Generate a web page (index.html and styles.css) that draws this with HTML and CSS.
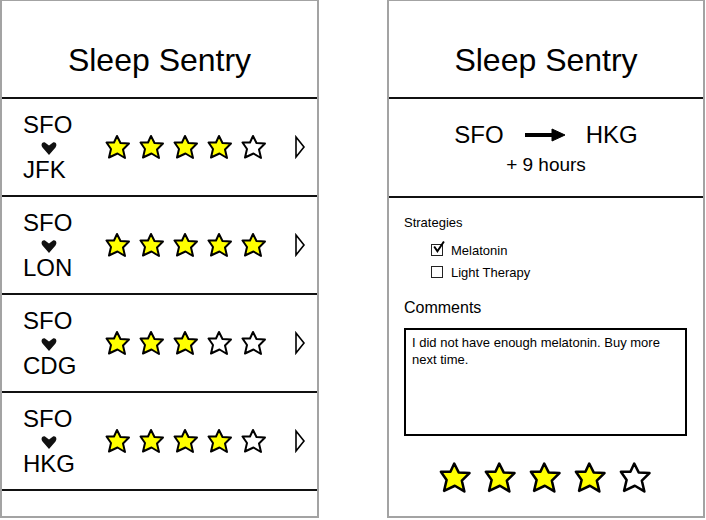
FILE: index.html
```html
<!DOCTYPE html>
<html lang="en">
<head>
    <meta charset="UTF-8">
    <title>Sleep Sentry</title>
    <link rel="stylesheet" href="styles.css">
</head>
<body>
<div class="screens">

    <!-- Trip list -->
    <div class="phone">
        <div class="title">Sleep Sentry</div>

        <div class="trip">
            <div class="codes">
                <div>SFO</div>
                <svg class="heart" viewBox="0 0 18 16"><path d="M9 15 L2.5 7.5 C0.5 5 2 1.5 5 2.5 L9 5.5 L13 2.5 C16 1.5 17.5 5 15.5 7.5 Z"/></svg>
                <div>JFK</div>
            </div>
            <div class="stars">
                <svg class="star on" viewBox="0 0 26 26"><path d="M12 2 L15.5 9 L24 9.5 L18 15.5 L20 24 L12.5 19.5 L4 23.5 L6 15 L1.5 8.5 L9 8.5 Z"/></svg>
                <svg class="star on" viewBox="0 0 26 26"><path d="M12 2 L15.5 9 L24 9.5 L18 15.5 L20 24 L12.5 19.5 L4 23.5 L6 15 L1.5 8.5 L9 8.5 Z"/></svg>
                <svg class="star on" viewBox="0 0 26 26"><path d="M12 2 L15.5 9 L24 9.5 L18 15.5 L20 24 L12.5 19.5 L4 23.5 L6 15 L1.5 8.5 L9 8.5 Z"/></svg>
                <svg class="star on" viewBox="0 0 26 26"><path d="M12 2 L15.5 9 L24 9.5 L18 15.5 L20 24 L12.5 19.5 L4 23.5 L6 15 L1.5 8.5 L9 8.5 Z"/></svg>
                <svg class="star" viewBox="0 0 26 26"><path d="M12 2 L15.5 9 L24 9.5 L18 15.5 L20 24 L12.5 19.5 L4 23.5 L6 15 L1.5 8.5 L9 8.5 Z"/></svg>
            </div>
            <svg class="go" viewBox="0 0 12 24"><path d="M2 2 L10 12 L2 22 Z"/></svg>
        </div>

        <div class="trip">
            <div class="codes">
                <div>SFO</div>
                <svg class="heart" viewBox="0 0 18 16"><path d="M9 15 L2.5 7.5 C0.5 5 2 1.5 5 2.5 L9 5.5 L13 2.5 C16 1.5 17.5 5 15.5 7.5 Z"/></svg>
                <div>LON</div>
            </div>
            <div class="stars">
                <svg class="star on" viewBox="0 0 26 26"><path d="M12 2 L15.5 9 L24 9.5 L18 15.5 L20 24 L12.5 19.5 L4 23.5 L6 15 L1.5 8.5 L9 8.5 Z"/></svg>
                <svg class="star on" viewBox="0 0 26 26"><path d="M12 2 L15.5 9 L24 9.5 L18 15.5 L20 24 L12.5 19.5 L4 23.5 L6 15 L1.5 8.5 L9 8.5 Z"/></svg>
                <svg class="star on" viewBox="0 0 26 26"><path d="M12 2 L15.5 9 L24 9.5 L18 15.5 L20 24 L12.5 19.5 L4 23.5 L6 15 L1.5 8.5 L9 8.5 Z"/></svg>
                <svg class="star on" viewBox="0 0 26 26"><path d="M12 2 L15.5 9 L24 9.5 L18 15.5 L20 24 L12.5 19.5 L4 23.5 L6 15 L1.5 8.5 L9 8.5 Z"/></svg>
                <svg class="star on" viewBox="0 0 26 26"><path d="M12 2 L15.5 9 L24 9.5 L18 15.5 L20 24 L12.5 19.5 L4 23.5 L6 15 L1.5 8.5 L9 8.5 Z"/></svg>
            </div>
            <svg class="go" viewBox="0 0 12 24"><path d="M2 2 L10 12 L2 22 Z"/></svg>
        </div>

        <div class="trip">
            <div class="codes">
                <div>SFO</div>
                <svg class="heart" viewBox="0 0 18 16"><path d="M9 15 L2.5 7.5 C0.5 5 2 1.5 5 2.5 L9 5.5 L13 2.5 C16 1.5 17.5 5 15.5 7.5 Z"/></svg>
                <div>CDG</div>
            </div>
            <div class="stars">
                <svg class="star on" viewBox="0 0 26 26"><path d="M12 2 L15.5 9 L24 9.5 L18 15.5 L20 24 L12.5 19.5 L4 23.5 L6 15 L1.5 8.5 L9 8.5 Z"/></svg>
                <svg class="star on" viewBox="0 0 26 26"><path d="M12 2 L15.5 9 L24 9.5 L18 15.5 L20 24 L12.5 19.5 L4 23.5 L6 15 L1.5 8.5 L9 8.5 Z"/></svg>
                <svg class="star on" viewBox="0 0 26 26"><path d="M12 2 L15.5 9 L24 9.5 L18 15.5 L20 24 L12.5 19.5 L4 23.5 L6 15 L1.5 8.5 L9 8.5 Z"/></svg>
                <svg class="star" viewBox="0 0 26 26"><path d="M12 2 L15.5 9 L24 9.5 L18 15.5 L20 24 L12.5 19.5 L4 23.5 L6 15 L1.5 8.5 L9 8.5 Z"/></svg>
                <svg class="star" viewBox="0 0 26 26"><path d="M12 2 L15.5 9 L24 9.5 L18 15.5 L20 24 L12.5 19.5 L4 23.5 L6 15 L1.5 8.5 L9 8.5 Z"/></svg>
            </div>
            <svg class="go" viewBox="0 0 12 24"><path d="M2 2 L10 12 L2 22 Z"/></svg>
        </div>

        <div class="trip">
            <div class="codes">
                <div>SFO</div>
                <svg class="heart" viewBox="0 0 18 16"><path d="M9 15 L2.5 7.5 C0.5 5 2 1.5 5 2.5 L9 5.5 L13 2.5 C16 1.5 17.5 5 15.5 7.5 Z"/></svg>
                <div>HKG</div>
            </div>
            <div class="stars">
                <svg class="star on" viewBox="0 0 26 26"><path d="M12 2 L15.5 9 L24 9.5 L18 15.5 L20 24 L12.5 19.5 L4 23.5 L6 15 L1.5 8.5 L9 8.5 Z"/></svg>
                <svg class="star on" viewBox="0 0 26 26"><path d="M12 2 L15.5 9 L24 9.5 L18 15.5 L20 24 L12.5 19.5 L4 23.5 L6 15 L1.5 8.5 L9 8.5 Z"/></svg>
                <svg class="star on" viewBox="0 0 26 26"><path d="M12 2 L15.5 9 L24 9.5 L18 15.5 L20 24 L12.5 19.5 L4 23.5 L6 15 L1.5 8.5 L9 8.5 Z"/></svg>
                <svg class="star on" viewBox="0 0 26 26"><path d="M12 2 L15.5 9 L24 9.5 L18 15.5 L20 24 L12.5 19.5 L4 23.5 L6 15 L1.5 8.5 L9 8.5 Z"/></svg>
                <svg class="star" viewBox="0 0 26 26"><path d="M12 2 L15.5 9 L24 9.5 L18 15.5 L20 24 L12.5 19.5 L4 23.5 L6 15 L1.5 8.5 L9 8.5 Z"/></svg>
            </div>
            <svg class="go" viewBox="0 0 12 24"><path d="M2 2 L10 12 L2 22 Z"/></svg>
        </div>
    </div>

    <!-- Trip detail -->
    <div class="phone">
        <div class="title">Sleep Sentry</div>

        <div class="flight">
            <div class="route">
                <span>SFO</span>
                <svg class="arrow" viewBox="0 0 42 14"><path d="M1 7 L30 7" /><path class="head" d="M28 1 L41 7 L28 13 Z"/></svg>
                <span>HKG</span>
            </div>
            <div class="shift">+ 9 hours</div>
        </div>

        <div class="details">
            <div class="label">Strategies</div>
            <div class="check first">
                <span class="box"><svg viewBox="0 0 12 12"><path d="M2 5 L5 9.5 L11 0.5"/></svg></span>
                Melatonin
            </div>
            <div class="check">
                <span class="box"></span>
                Light Therapy
            </div>

            <div class="comments-label">Comments</div>
            <div class="comments">I did not have enough melatonin. Buy more next time.</div>

            <div class="rating">
                <svg class="star on" viewBox="0 0 26 26"><path d="M12 2 L15.5 9 L24 9.5 L18 15.5 L20 24 L12.5 19.5 L4 23.5 L6 15 L1.5 8.5 L9 8.5 Z"/></svg>
                <svg class="star on" viewBox="0 0 26 26"><path d="M12 2 L15.5 9 L24 9.5 L18 15.5 L20 24 L12.5 19.5 L4 23.5 L6 15 L1.5 8.5 L9 8.5 Z"/></svg>
                <svg class="star on" viewBox="0 0 26 26"><path d="M12 2 L15.5 9 L24 9.5 L18 15.5 L20 24 L12.5 19.5 L4 23.5 L6 15 L1.5 8.5 L9 8.5 Z"/></svg>
                <svg class="star on" viewBox="0 0 26 26"><path d="M12 2 L15.5 9 L24 9.5 L18 15.5 L20 24 L12.5 19.5 L4 23.5 L6 15 L1.5 8.5 L9 8.5 Z"/></svg>
                <svg class="star" viewBox="0 0 26 26"><path d="M12 2 L15.5 9 L24 9.5 L18 15.5 L20 24 L12.5 19.5 L4 23.5 L6 15 L1.5 8.5 L9 8.5 Z"/></svg>
            </div>
        </div>
    </div>

</div>
</body>
</html>
```

FILE: styles.css
```css
body {
    margin: 0;
    background: #fff;
    font-family: "Liberation Sans", Arial, sans-serif;
    color: #000;
}
.screens {
    display: flex;
    gap: 68px;
}
.phone {
    box-sizing: border-box;
    width: 319px;
    height: 518px;
    border: 2px solid #a3a3a3;
    border-top-width: 1px;
    background: #fff;
}
.phone + .phone { width: 318px; }

.title {
    box-sizing: border-box;
    height: 98px;
    padding-top: 22px;
    border-bottom: 2px solid #111;
    display: flex;
    align-items: center;
    justify-content: center;
    font-size: 32px;
}

/* list rows */
.trip {
    height: 96px;
    border-bottom: 2px solid #111;
    display: flex;
    align-items: center;
    padding-left: 21px;
}
.codes {
    width: 82px;
    font-size: 24px;
    line-height: 24px;
}
.heart {
    display: block;
    width: 18px;
    height: 16px;
    margin: 3px 0 2px 17px;
    fill: #111;
}
.stars {
    display: flex;
    gap: 8px;
}
.star {
    width: 26px;
    height: 26px;
    fill: #fff;
    stroke: #000;
    stroke-width: 2;
    stroke-linejoin: round;
}
.star.on { fill: #ffff00; }
.go {
    width: 12px;
    height: 24px;
    margin-left: 27px;
    fill: #fff;
    stroke: #000;
    stroke-width: 1.6;
}

/* detail screen */
.flight {
    box-sizing: border-box;
    height: 99px;
    padding-top: 22px;
    border-bottom: 2px solid #111;
    text-align: center;
}
.route {
    display: flex;
    justify-content: center;
    align-items: center;
    gap: 20px;
    font-size: 24px;
    line-height: 28px;
}
.arrow {
    width: 42px;
    height: 14px;
    stroke: #000;
    stroke-width: 4;
}
.arrow .head { fill: #000; stroke-width: 1; stroke-linejoin: round; }
.shift {
    font-size: 19px;
    line-height: 22px;
    margin-top: 5px;
}
.details {
    padding: 17px 16px 0 15px;
}
.label {
    font-size: 13px;
    line-height: 16px;
}
.check {
    display: flex;
    align-items: center;
    gap: 8px;
    font-size: 13px;
    margin-left: 27px;
    height: 22px;
}
.check.first { margin-top: 8px; }
.box {
    box-sizing: border-box;
    width: 12px;
    height: 12px;
    border: 1.5px solid #222;
    position: relative;
}
.box svg {
    position: absolute;
    left: 0;
    top: -4px;
    width: 13px;
    height: 13px;
    fill: none;
    stroke: #000;
    stroke-width: 1.8;
}
.comments-label {
    font-size: 16px;
    line-height: 18px;
    margin-top: 16px;
}
.comments {
    box-sizing: border-box;
    height: 108px;
    margin-top: 11px;
    border: 2px solid #000;
    padding: 4px 6px;
    font-size: 13px;
    line-height: 17px;
}
.rating {
    display: flex;
    justify-content: center;
    gap: 12px;
    margin-top: 25px;
}
.rating .star {
    width: 33px;
    height: 33px;
}
```
